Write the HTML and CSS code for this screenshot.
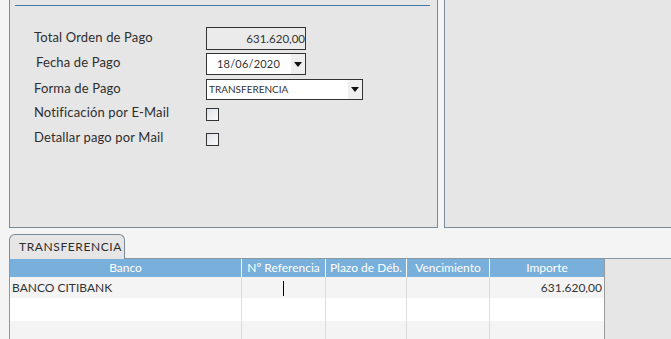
FILE: index.html
```html
<!DOCTYPE html>
<html>
<head>
	<meta charset="utf-8">
	<title>Orden de Pago</title>
	<link rel="stylesheet" href="styles.css">
</head>
<body>
	<!-- TOP PANELS -->
	<div class="top">
		<div class="panel left">
			<div class="rule"></div>

			<div class="row r1">
				<div class="label">Total Orden de Pago</div>
				<div class="total">631.620,00</div>
			</div>
			<div class="row r2">
				<div class="label fecha">Fecha de Pago</div>
				<div class="date">
					<span class="date-text">18/06/2020</span>
					<span class="arrow"><i></i></span>
				</div>
			</div>
			<div class="row r3">
				<div class="label">Forma de Pago</div>
				<div class="select">
					<span class="select-text">TRANSFERENCIA</span>
					<span class="arrow"><i></i></span>
				</div>
			</div>
			<div class="row r4">
				<div class="label">Notificación por E-Mail</div>
				<div class="check"></div>
			</div>
			<div class="row r5">
				<div class="label">Detallar pago por Mail</div>
				<div class="check"></div>
			</div>
		</div>
		<div class="panel right"></div>
	</div>

	<!-- TABS -->
	<div class="tabs">
		<div class="tab">TRANSFERENCIA</div>
	</div>
	<div class="tab-body">
		<table class="grid">
			<tr>
				<th class="c1">Banco</th>
				<th class="c2">Nº Referencia</th>
				<th class="c3">Plazo de Déb.</th>
				<th class="c4">Vencimiento</th>
				<th class="c5">Importe</th>
			</tr>
			<tr class="odd">
				<td>BANCO CITIBANK</td>
				<td class="center"><span class="cursor"></span></td>
				<td></td>
				<td></td>
				<td class="num">631.620,00</td>
			</tr>
			<tr class="even">
				<td></td><td></td><td></td><td></td><td></td>
			</tr>
			<tr class="odd">
				<td></td><td></td><td></td><td></td><td></td>
			</tr>
		</table>
	</div>
</body>
</html>
```

FILE: styles.css
```css
body{
	margin: 0;
	background-color: #f4f4f4;
	font-family: Lato, "Liberation Sans", sans-serif;
	font-size: 13px;
	color: #333;
	overflow: hidden;
}

/* top panels */
.top{
	display: flex;
	height: 228px;
	gap: 6px;
	padding-left: 9px;
}

.panel{
	background-color: #e6e6e6;
	border: 1px solid #798b96;
	border-top: none;
	box-sizing: border-box;
	height: 228px;
}

.left{
	width: 429px;
	flex: none;
}

.right{
	flex: 1;
	border-right: none;
}

.rule{
	margin: 5px 7px 0 5px;
	border-top: 1px solid #3d7bb0;
}

.row{
	display: flex;
	align-items: center;
	padding-left: 24px;
}

.r1{ margin-top: 21px; height: 23px; }
.r2{ margin-top: 3px; height: 22px; }
.r3{ margin-top: 4px; height: 21px; }
.r4{ margin-top: 2px; height: 24px; }
.r5{ margin-top: 1px; height: 24px; }

.label{
	width: 172px;
	flex: none;
	margin-bottom: 4px;
	color: #2e2e2e;
	letter-spacing: 0.15px;
}

.fecha{
	padding-left: 2px;
	width: 170px;
}

.total{
	box-sizing: border-box;
	width: 100px;
	height: 23px;
	line-height: 21px;
	border: 1px solid #333;
	background-color: #ebebeb;
	text-align: right;
	font-size: 11.5px;
}

.date, .select{
	box-sizing: border-box;
	display: flex;
	height: 22px;
	border: 1px solid #333;
	background-color: #fff;
	font-size: 11px;
}

.date{ width: 100px; }
.select{ width: 157px; height: 21px; }

.date-text{
	flex: 1;
	line-height: 20px;
	padding-left: 10px;
	letter-spacing: 0.2px;
}

.select-text{
	flex: 1;
	line-height: 19px;
	padding-left: 2px;
	font-size: 10px;
}

.arrow{
	width: 14px;
	background-color: #efefef;
	display: flex;
	align-items: center;
	justify-content: center;
}

.arrow i{
	width: 0;
	height: 0;
	border-left: 4px solid transparent;
	border-right: 4px solid transparent;
	border-top: 5px solid #111;
}

.check{
	box-sizing: border-box;
	width: 13px;
	height: 13px;
	border: 1px solid #333;
	background: linear-gradient(135deg, #dfe4ea, #fafafa);
}

/* tabs */
.tabs{
	display: flex;
	padding: 6px 0 0 9px;
}

.tab{
	box-sizing: border-box;
	width: 116px;
	height: 25px;
	line-height: 24px;
	padding-left: 9px;
	background-color: #e6e6e6;
	border: 1px solid #798b96;
	border-bottom: none;
	border-radius: 6px 6px 0 0;
	margin-bottom: -1px;
	position: relative;
	font-size: 12px;
	letter-spacing: 0.6px;
	white-space: nowrap;
	color: #2e2e2e;
}

.tab-body{
	margin-left: 9px;
	border-top: 1px solid #8a98a1;
	border-left: 1px solid #8a98a1;
	background-color: #e6e6e6;
	height: 90px;
}

.grid{
	border-collapse: collapse;
	width: 594px;
	table-layout: fixed;
	font-size: 12px;
	border-right: 1px solid #9a9a9a;
}

.grid th{
	height: 18px;
	padding: 0;
	background-color: #79afdb;
	color: #fff;
	font-weight: normal;
	border-right: 1px solid #fff;
	line-height: 18px;
}

.grid th.c5{ border-right: 1px solid #9a9a9a; }

.c1{ width: 231px; }
.c2{ width: 83px; }
.c3{ width: 80px; }
.c4{ width: 82px; }
.c5{ width: 114px; }

.grid td{
	padding: 0 2px;
	border-right: 1px solid #dcdcdc;
	height: 21px;
	font-size: 12px;
	white-space: nowrap;
}

.grid td:last-child{ border-right: 1px solid #9a9a9a; }

.odd td{ background-color: #f4f4f4; }
.even td{ background-color: #fff; height: 23px; }

.num{ text-align: right; }
.center{ text-align: center; }

.cursor{
	display: inline-block;
	width: 1px;
	height: 15px;
	background-color: #000;
	vertical-align: middle;
}
```
